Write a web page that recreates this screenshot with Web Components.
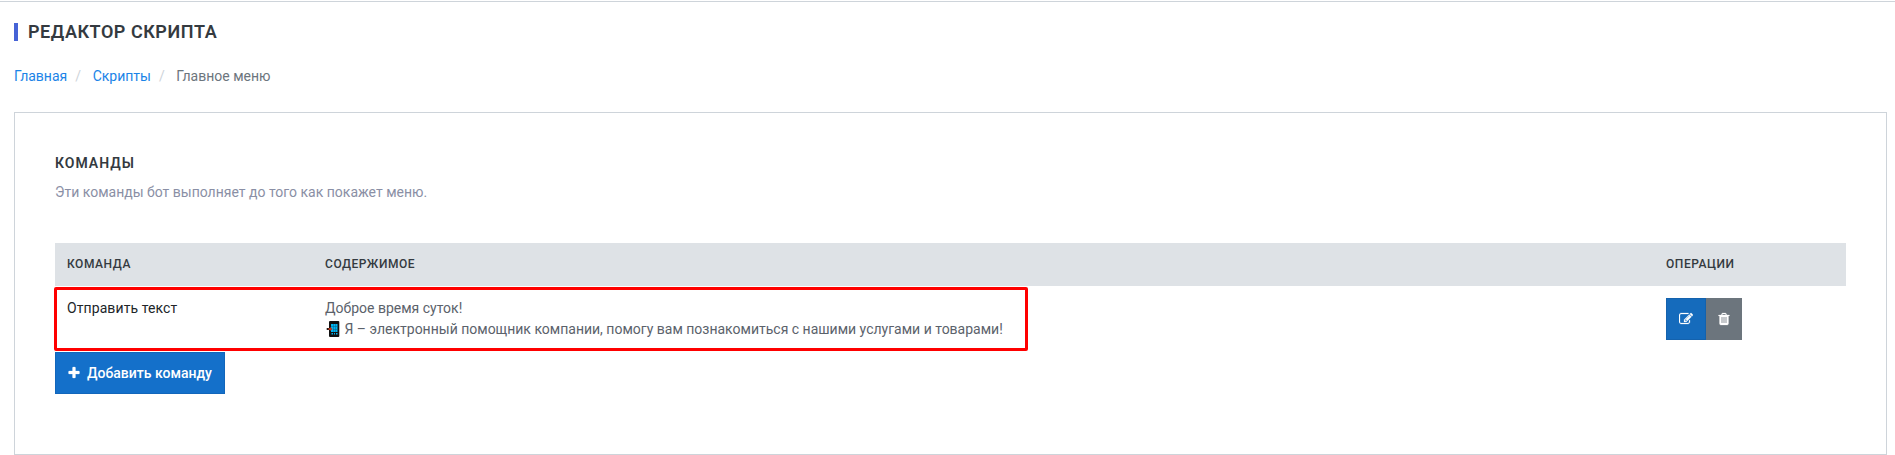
<!DOCTYPE html>
<html lang="ru">
<head>
<meta charset="utf-8">
<title>Редактор скрипта</title>
<style>
html,body{margin:0;height:455px;overflow:hidden;background:#fff}
body{font:400 14px/21px Roboto,"Liberation Sans",sans-serif;color:#5b626b}
</style>
</head>
<body>
<script-page></script-page>
<script>
function define(name, html) {
  customElements.define(name, class extends HTMLElement {
    constructor() {
      super();
      const t = document.createElement('template');
      t.innerHTML = html;
      this.attachShadow({ mode: 'open' }).append(t.content.cloneNode(true));
    }
  });
}

const ICONS = {
  edit: 'M888 1184l116-116-152-152-116 116v56h96v96h56zm440-720q-16-16-33 1l-350 350q-17 17-1 33t33-1l350-350q17-17 1-33zm80 594v190q0 119-84.5 203.5t-203.5 84.5h-832q-119 0-203.5-84.5t-84.5-203.5v-832q0-119 84.5-203.5t203.5-84.5h832q63 0 117 25 15 7 18 23 3 17-9 29l-49 49q-14 14-32 8-23-6-45-6h-832q-66 0-113 47t-47 113v832q0 66 47 113t113 47h832q66 0 113-47t47-113v-126q0-13 9-22l64-64q15-15 35-7t20 29zm-96-738l288 288-672 672h-288v-288zm444 132l-92 92-288-288 92-92q28-28 68-28t68 28l152 152q28 28 28 68t-28 68z',
  trash: 'M704 1376v-704q0-14-9-23t-23-9h-64q-14 0-23 9t-9 23v704q0 14 9 23t23 9h64q14 0 23-9t9-23zm256 0v-704q0-14-9-23t-23-9h-64q-14 0-23 9t-9 23v704q0 14 9 23t23 9h64q14 0 23-9t9-23zm256 0v-704q0-14-9-23t-23-9h-64q-14 0-23 9t-9 23v704q0 14 9 23t23 9h64q14 0 23-9t9-23zm-544-992h448l-48-117q-7-9-17-11h-317q-10 2-17 11zm928 32v64q0 14-9 23t-23 9h-96v948q0 83-47 143.5t-113 60.5h-832q-66 0-113-58.5t-47-141.5v-952h-96q-14 0-23-9t-9-23v-64q0-14 9-23t23-9h309l70-167q15-37 54-63t79-26h320q40 0 79 26t54 63l70 167h309q14 0 23 9t9 23z',
  plus: 'M1600 736v192q0 40-28 68t-68 28h-416v416q0 40-28 68t-68 28h-192q-40 0-68-28t-28-68v-416h-416q-40 0-68-28t-28-68v-192q0-40 28-68t68-28h416v-416q0-40 28-68t68-28h192q40 0 68 28t28 68v416h416q40 0 68 28t28 68z'
};

customElements.define('ui-icon', class extends HTMLElement {
  constructor() {
    super();
    this.attachShadow({ mode: 'open' }).innerHTML =
      `<style>:host{display:block;width:14px;height:14px}svg{display:block}</style>
       <svg width="14" height="14" viewBox="0 0 1792 1792" fill="#fff" stroke="#fff" stroke-width="30"><path d="${ICONS[this.getAttribute('name')]}"/></svg>`;
  }
});

define('phone-emoji', `
<style>:host{display:inline-block;width:15px;height:16px;margin-right:1px;vertical-align:-3px}svg{display:block}</style>
<svg width="15" height="16" viewBox="0 0 15 16">
  <rect x="4" y="0" width="10.300" height="16" rx="1" fill="#111"/>
  <path d="M6 3h6.500v8H6zM6.500 12h1.500v1.500H6.500zM9 12h1v1.500H9zM11 12h1.500v1.500H11z" fill="#00b4f0"/>
  <path d="M8.500 3v8M10.500 3v8M6 5.500h6.500M8 8.500h4.500" stroke="#08658c" stroke-width=".5"/>
  <path d="M1.700 7h2.300v2H1.700z" fill="#241c1a"/>
  <path d="M3.500 7h1.500V6l2.600 2-2.600 2V9H3.500z" fill="#b8361d"/>
</svg>`);

define('page-title', `
<style>
:host{display:flex;align-items:center;height:18px;border-left:4px solid #4663d6;padding-left:10px;box-sizing:border-box}
h1{margin:0;font-size:18px;line-height:18px;font-weight:600;letter-spacing:.53px;color:#343a40;white-space:nowrap}
</style><h1><slot></slot></h1>`);

define('bread-crumbs', `
<style>
:host{display:flex;height:21px;color:#6c757d}
::slotted(a){color:#1b84e7;text-decoration:none}
i{font-style:normal;color:#ced4da;width:25.4px;box-sizing:border-box;padding-left:8px}
</style><slot name="a"></slot><i>/</i><slot name="b"></slot><i>/</i><slot></slot>`);

define('add-button', `
<style>
:host{display:block}
button{display:flex;align-items:center;width:170px;height:42px;box-sizing:border-box;padding:0 0 0 11px;border:1px solid #1266bb;background:#1470ca;color:#fff;font:500 14px/21px Roboto,sans-serif;white-space:nowrap}
ui-icon{margin:0 6px 0 0}
</style><button><ui-icon name="plus"></ui-icon><span><slot></slot></span></button>`);

define('row-actions', `
<style>
:host{display:flex;height:42px}
button{display:flex;align-items:center;justify-content:center;height:42px;box-sizing:border-box;padding:0;margin:0;border:0}
.e{width:40px;background:#156bbc;box-shadow:inset 0 0 0 1px #1462ad}
.d{width:36px;background:#6c757d}
</style><button class="e" aria-label="Изменить"><ui-icon name="edit"></ui-icon></button><button class="d" aria-label="Удалить"><ui-icon name="trash"></ui-icon></button>`);

define('command-table', `
<style>
:host{display:block;position:relative}
.row{display:grid;grid-template-columns:258px 1341px 1fr;padding-left:12px}
.head{height:43px;line-height:42px;background:#dee2e6;color:#343a40;font-size:12px;font-weight:500;letter-spacing:.55px}
.body{height:66px;box-sizing:border-box;padding-top:12px}
.name{color:#212529;letter-spacing:.09px}
.mark{position:absolute;left:-1px;top:44px;width:974px;height:64px;box-sizing:border-box;border:3px solid #f00;border-radius:2px}
</style>
<div class="row head"><span>КОМАНДА</span><span>СОДЕРЖИМОЕ</span><span>ОПЕРАЦИИ</span></div>
<div class="row body"><div class="name"><slot name="name"></slot></div><div><slot name="content"></slot></div><row-actions></row-actions></div>
<div class="mark"></div>`);

define('content-card', `
<style>
:host{display:block;width:1873px;height:343px;box-sizing:border-box;border:1px solid #ced4da;padding:40px}
h2{margin:0;font-size:14px;line-height:21px;font-weight:600;letter-spacing:1px;color:#343a40}
p{margin:8px 0 40px;color:#8a8fa5}
</style><h2><slot name="title"></slot></h2><p><slot name="note"></slot></p><slot></slot>`);

define('script-page', `
<style>
:host{display:flow-root;width:1895px;height:454px;box-sizing:border-box;padding:21px 0 0 14px;border-top:1px solid #ced4da;margin-top:1px}
bread-crumbs{margin:25px 0 25px}
</style>
<page-title>РЕДАКТОР СКРИПТА</page-title>
<bread-crumbs><a slot="a" href="#">Главная</a><a slot="b" href="#">Скрипты</a><span>Главное меню</span></bread-crumbs>
<content-card>
  <span slot="title">КОМАНДЫ</span>
  <span slot="note">Эти команды бот выполняет до того как покажет меню.</span>
  <command-table>
    <span slot="name">Отправить текст</span>
    <span slot="content">Доброе время суток!<br><phone-emoji></phone-emoji> Я – электронный помощник компании, помогу вам познакомиться с нашими услугами и товарами!</span>
  </command-table>
  <add-button>Добавить команду</add-button>
</content-card>`);
</script>
</body>
</html>
